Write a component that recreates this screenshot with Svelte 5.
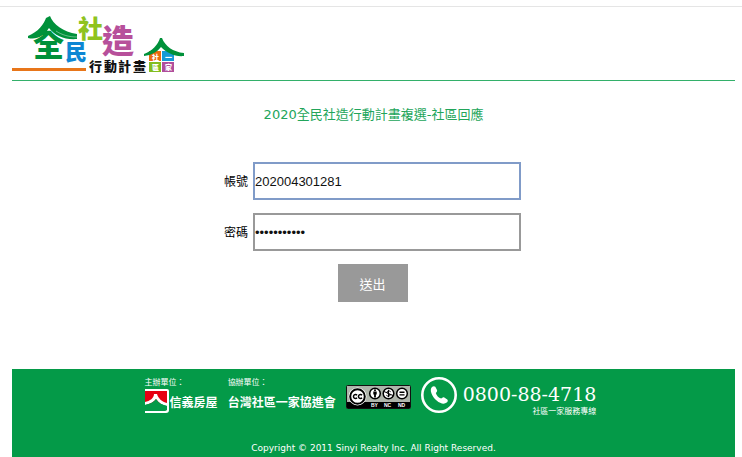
<script>
  let account = $state('202004301281');
  let password = $state('taiwan12345');

  function submitLogin(e) {
    e.preventDefault();
  }
</script>

<svelte:head>
  <title>全民社造行動計畫</title>
</svelte:head>

<div class="page">
  <header>
    <!-- Site logo -->
    <svg class="logo" width="176" height="64" viewBox="10 12 176 64" role="img" aria-label="全民社造行動計畫">
      <text x="33" y="56" font-size="31" fill="#00913a">全</text>
      <path d="M28 36 C38 32 44 24 46 18 L50 16 C53 24 63 32 77 34 L77 39 C65 40 55 36 49 28 C44 36 37 40 28 38 Z" fill="#00913a" />
      <path d="M56 31 C62 35 69 37 77 37" fill="none" stroke="#fff" stroke-width="0.4" />
      <text x="65" y="60" font-size="22" fill="#0d86d3">民</text>
      <text x="78" y="38" font-size="25" fill="#8fc31f">社</text>
      <text x="102" y="53" font-size="32" fill="#b7509b">造</text>
      <rect x="12" y="68" width="74" height="3" fill="#e8761a" />
      <text x="89 104 118 133" y="71" font-size="13" fill="#111">行動計畫</text>
      <rect x="149" y="51" width="12" height="10" fill="#ea6b10" />
      <rect x="162" y="51" width="12" height="10" fill="#149bd7" />
      <rect x="149" y="62" width="12" height="10" fill="#83bd20" />
      <rect x="162" y="62" width="12" height="10" fill="#b04e9b" />
      <g font-size="7" fill="#fff">
        <text x="152" y="60">社</text>
        <text x="165" y="60">一</text>
        <text x="152" y="70">區</text>
        <text x="165" y="70">家</text>
      </g>
      <path d="M144 54 C152 51 158 45 160 38 L162 38 C165 46 173 52 184 53 L184 56 C175 57 167 53 161 47 C157 52 152 55 144 56 Z" fill="#00913a" />
    </svg>
  </header>

  <main>
    <h1>2020全民社造行動計畫複選-社區回應</h1>

    <form onsubmit={submitLogin}>
      <div class="field">
        <label for="account">帳號</label>
        <input class="current" id="account" type="text" bind:value={account} />
      </div>
      <div class="field">
        <label for="password">密碼</label>
        <input id="password" type="password" bind:value={password} />
      </div>
      <button type="submit">送出</button>
    </form>
  </main>

  <footer>
    <div class="sponsors">
      <div class="sponsor">
        <span class="role">主辦單位：</span>
        <div class="brand">
          <svg width="25" height="26" viewBox="0 0 25 26" aria-hidden="true">
            <path d="M0 1H22Q24 1 24 3V22Q24 25 21 25H0V23H20Q22 23 22 21V3H0Z" fill="#fff" />
            <rect x="0" y="3" width="22" height="13" fill="#e60012" />
            <path d="M0 14 C5 13 9 10 9 6 L12 6 C13 10 17 14 22 15 L22 18 C17 17 14 15 11 11 C9 14 5 16 0 17 Z" fill="#fff" />
            <path d="M0 17 C5 16 9 14 11 11 C14 15 17 17 22 18 L22 22 L0 22 Z" fill="#049a48" />
          </svg>
          <span>信義房屋</span>
        </div>
      </div>

      <div class="sponsor">
        <span class="role">協辦單位：</span>
        <div class="brand">台灣社區一家協進會</div>
      </div>

      <!-- Creative Commons BY-NC-ND -->
      <svg class="license" width="65" height="24" viewBox="0 0 65 24" role="img" aria-label="CC BY-NC-ND">
        <rect x="0.5" y="0.5" width="64" height="23" rx="1" fill="#aeb5ab" stroke="#111" />
        <rect x="1" y="17" width="63" height="6" fill="#000" />
        <circle cx="11.5" cy="11.5" r="9" fill="#fff" />
        <circle cx="11.5" cy="11.5" r="7.3" fill="#fff" stroke="#000" stroke-width="2" />
        <path d="M11 10.2 A2 2 0 1 0 11 12.8 M16 10.2 A2 2 0 1 0 16 12.8" fill="none" stroke="#000" stroke-width="1.5" />
        <g fill="#fff" stroke="#000" stroke-width="1.5">
          <circle cx="29" cy="8.5" r="5.3" />
          <circle cx="42.5" cy="8.5" r="5.3" />
          <circle cx="56" cy="8.5" r="5.3" />
        </g>
        <circle cx="29" cy="5.2" r="1" />
        <path d="M27.3 6.6h3.4v3h-.8v3h-1.8v-3h-.8z" />
        <path d="M38 6.5 L47 10.5 M44.6 6.7 C43 5.2 40.8 6 41 7.4 C41.2 8.8 44 8.6 44 10.2 C43.8 11.6 41.6 11.6 40.4 10.3 M42.5 4.8v7.4" fill="none" stroke="#000" />
        <path d="M53.5 7.2h5M53.5 9.9h5" stroke="#000" stroke-width="1.4" />
        <g class="terms" font-size="5" fill="#fff">
          <text x="25" y="22">BY</text>
          <text x="38" y="22">NC</text>
          <text x="52" y="22">ND</text>
        </g>
      </svg>

      <svg class="phone-icon" width="36" height="36" viewBox="0 0 36 36" aria-hidden="true">
        <circle cx="18" cy="18" r="16.7" fill="none" stroke="#fff" stroke-width="2.6" />
        <path d="M11 10 C12 9 13.5 8.8 14.3 9.8 L16 13 C16.5 14 15.8 15 14.8 16 C15.5 18.5 17.5 20.8 20.2 21.6 C21.2 20.3 22.3 19.8 23.3 20.4 L26.3 22.4 C27.2 23.2 26.8 24.6 25.7 25.6 C23.4 27.6 19.5 27 15.6 23.6 C11 19.6 8 12.8 11 10 Z" fill="#fff" />
      </svg>

      <div class="hotline">
        <span class="number">0800-88-4718</span>
        <span class="caption">社區一家服務專線</span>
      </div>
    </div>

    <p class="copyright">Copyright © 2011 Sinyi Realty Inc. All Right Reserved.</p>
  </footer>
</div>

<style>
  :global(body) {
    background: #fff;
    font-family: "DejaVu Sans", "Noto Sans CJK TC", sans-serif;
  }

  .page {
    margin-top: 6px;
    padding: 0 7px 0 12px;
    border-top: 1px solid #e5e5e5;
  }

  header {
    padding: 5px 0 4px;
    border-bottom: 1px solid #33b06a;
  }

  .logo {
    display: block;
    margin-left: -2px;
    overflow: visible;
    font-family: "Noto Sans CJK TC", sans-serif;
    font-weight: 900;
  }

  main {
    padding: 24px 0 67px;
  }

  h1 {
    margin: 0 0 37px;
    color: #22a55a;
    font-size: 13px;
    font-weight: 400;
    line-height: 20px;
    text-align: center;
  }

  form {
    display: flex;
    flex-direction: column;
    align-items: center;
    gap: 13px;
    padding-right: 2px;
  }

  .field {
    display: flex;
    align-items: center;
    gap: 5px;
  }

  label {
    padding-top: 2px;
    color: #000;
    font-size: 12px;
    line-height: 16px;
  }

  input {
    box-sizing: border-box;
    width: 268px;
    height: 38px;
    padding: 0;
    border: 2px solid #999;
    border-radius: 0;
    background: #fff;
    color: #111;
    font-family: "Liberation Sans", sans-serif;
    font-size: 13px;
  }

  input.current {
    border-color: #809bc8;
  }

  input:focus {
    outline: 1px solid #a9c8f5;
  }

  button {
    width: 70px;
    height: 38px;
    padding: 0;
    border: 0;
    background: #999;
    color: #fff;
    font-family: inherit;
    font-size: 13px;
    cursor: pointer;
  }

  footer {
    padding: 8px 0 4px;
    background: #049a48;
    color: #fff;
  }

  .sponsors {
    display: flex;
    justify-content: center;
    gap: 10px;
    padding-right: 6px;
  }

  .sponsor {
    display: flex;
    flex-direction: column;
  }

  .role {
    font-size: 8px;
    line-height: 12px;
  }

  .brand {
    display: flex;
    align-items: center;
    height: 24px;
    font-size: 12px;
    font-weight: 700;
    white-space: nowrap;
  }

  .license {
    margin-top: 8px;
  }

  .terms {
    font-family: "Liberation Sans", sans-serif;
    font-weight: 700;
  }

  .hotline {
    display: flex;
    flex-direction: column;
    align-items: flex-end;
    margin-left: -4px;
    padding-top: 6px;
  }

  .number {
    font-family: "DejaVu Serif", serif;
    font-size: 19px;
    line-height: 23px;
    white-space: nowrap;
  }

  .caption {
    font-size: 8px;
    line-height: 12px;
  }

  .copyright {
    margin: 24px 0 0;
    font-size: 9px;
    line-height: 12px;
    text-align: center;
  }
</style>
